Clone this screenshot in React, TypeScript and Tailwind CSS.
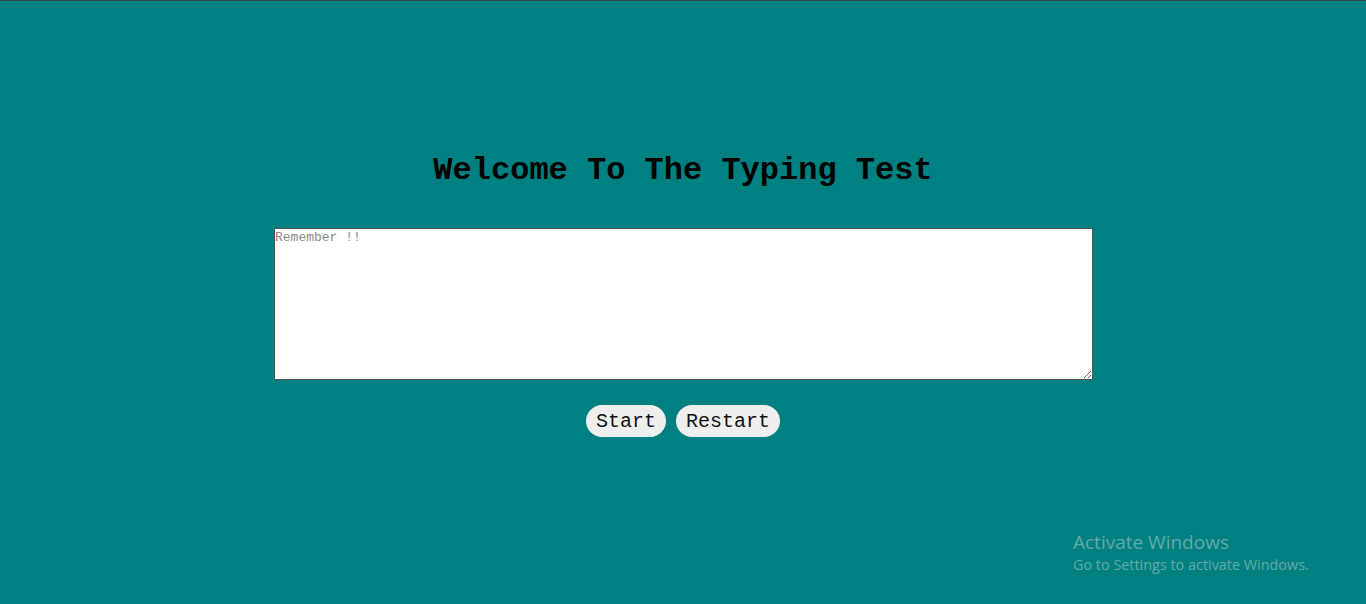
import React, { useState } from 'react';

const mono = { fontFamily: '"Liberation Mono", "Courier New", monospace' };

const App = () => {
  const [text, setText] = useState('');

  return (
    <div className="relative min-h-[604px] w-full overflow-hidden border-t border-[#3b4045] bg-[#008080]">
      <div className="flex flex-col items-center pt-[152px]">
        <h1
          className="text-[32px] leading-[36px] font-bold text-black"
          style={mono}
        >
          Welcome To The Typing Test
        </h1>

        <textarea
          value={text}
          onChange={(e) => setText(e.target.value)}
          placeholder="Remember !!"
          className="mt-[39px] ml-px h-[152px] w-[819px] border border-[#555] bg-white pl-0 pt-px text-[13px] leading-[15px] text-black placeholder:text-[#8a8a8a] outline-none"
          style={mono}
        />

        <div className="mt-[25px] flex gap-[10px]">
          <button
            className="h-[32px] rounded-full bg-[#efefef] pt-px px-[10px] text-[20px] text-[#111]"
            style={mono}
          >
            Start
          </button>
          <button
            className="h-[32px] rounded-full bg-[#efefef] pt-px px-[10px] text-[20px] text-[#111]"
            style={mono}
          >
            Restart
          </button>
        </div>
      </div>

      {/* windows watermark */}
      <div
        className="absolute left-[1073px] top-[528px] text-[#63a9a9]"
        style={{ fontFamily: '"Open Sans", "Noto Sans", sans-serif' }}
      >
        <div className="text-[19px] leading-[26px]">Activate Windows</div>
        <div className="text-[14.4px] leading-[20px]">Go to Settings to activate Windows.</div>
      </div>
    </div>
  );
};

export default App;
